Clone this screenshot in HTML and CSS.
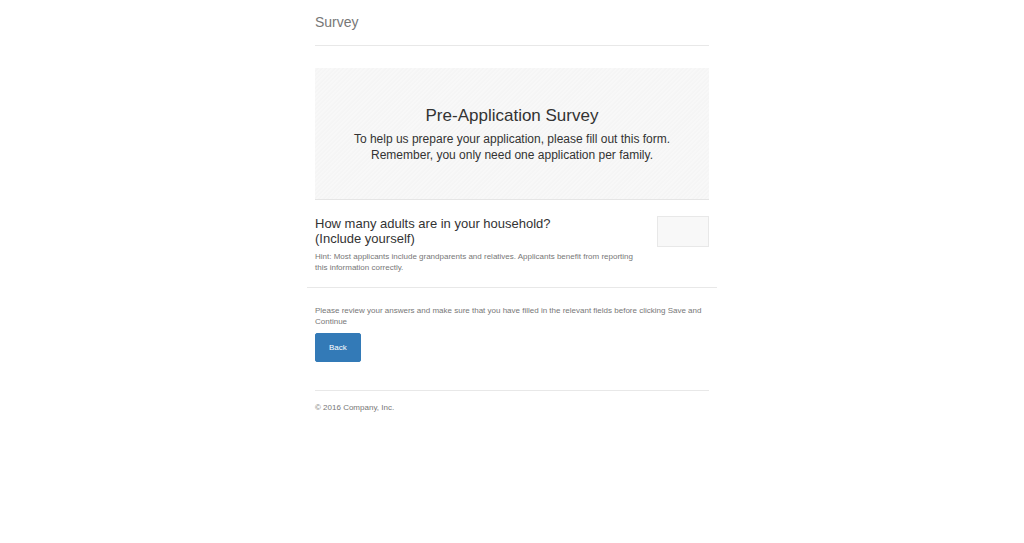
FILE: index.html
```html
<!DOCTYPE html>
<html lang="en">
<head>
<meta charset="utf-8">
<meta name="viewport" content="width=device-width, initial-scale=1">
<title>Survey</title>
<link rel="stylesheet" href="styles.css">
</head>
<body>
<div class="container">
  <header class="header"><h3 class="brand">Survey</h3></header>
  <main>
    <section class="jumbotron">
      <h1 class="jumbotron-title">Pre-Application Survey</h1>
      <p class="lead">To help us prepare your application, please fill out this form. Remember, you only need one application per family.</p>
    </section>
    <form class="survey">
      <div class="question">
        <div class="question-text">
          <label class="question-title" for="adults">How many adults are in your household? <span class="note">(Include yourself)</span></label>
          <p class="hint" id="adults-hint">Hint: Most applicants include grandparents and relatives. Applicants benefit from reporting this information correctly.</p>
        </div>
        <input class="answer" id="adults" type="text" inputmode="numeric" aria-describedby="adults-hint">
      </div>
      <div class="actions">
        <p class="hint">Please review your answers and make sure that you have filled in the relevant fields before clicking Save and Continue</p>
        <button class="button" type="button">Back</button>
      </div>
    </form>
  </main>
  <footer class="footer">© 2016 Company, Inc.</footer>
</div>
</body>
</html>
```
FILE: styles.css
```css
* { box-sizing: border-box; }

body {
  margin: 0;
  background: #fff;
  color: #333;
  font: 8px/11px "Liberation Sans", Arial, sans-serif;
}

h1, h3, p { margin: 0; font-weight: 400; }

.container {
  max-width: 394px;
  margin: 0 auto;
}

.header {
  padding: 14px 0;
  margin-bottom: 22px;
  border-bottom: 1px solid #e8e8e8;
}

.brand {
  color: #777;
  font-size: 14px;
  line-height: 17px;
}

.jumbotron {
  padding: 38px 34px 36px;
  border-bottom: 1px solid #e5e5e5;
  background: repeating-linear-gradient(135deg, #f8f8f8 0 1px, #f5f5f5 2px 3px);
  text-align: center;
}

.jumbotron-title {
  margin-bottom: 5px;
  font-size: 17px;
  line-height: 20px;
}

.lead {
  font-size: 12px;
  line-height: 16px;
}

.question {
  display: flex;
  justify-content: space-between;
  align-items: flex-start;
  gap: 16px;
  margin: 0 -8px;
  padding: 16px 8px 14px;
  border-bottom: 1px solid #e8e8e8;
}

.question-text { flex: 0 1 324px; }

.question-title {
  display: block;
  margin-bottom: 5px;
  font-size: 13px;
  line-height: 15px;
}

.note { display: block; }

.hint { color: #777; }

.answer {
  width: 52px;
  height: 31px;
  padding: 4px 8px;
  border: 1px solid #e8e8e8;
  background: #f8f8f8;
  font: inherit;
}

.actions { padding: 17px 0 28px; }

.button {
  display: block;
  margin-top: 6px;
  padding: 8px 13px;
  border: 1px solid #337ab7;
  border-radius: 2px;
  background: #337ab7;
  color: #fff;
  font: inherit;
}

.footer {
  padding: 11px 0;
  border-top: 1px solid #e8e8e8;
  color: #777;
}
```
